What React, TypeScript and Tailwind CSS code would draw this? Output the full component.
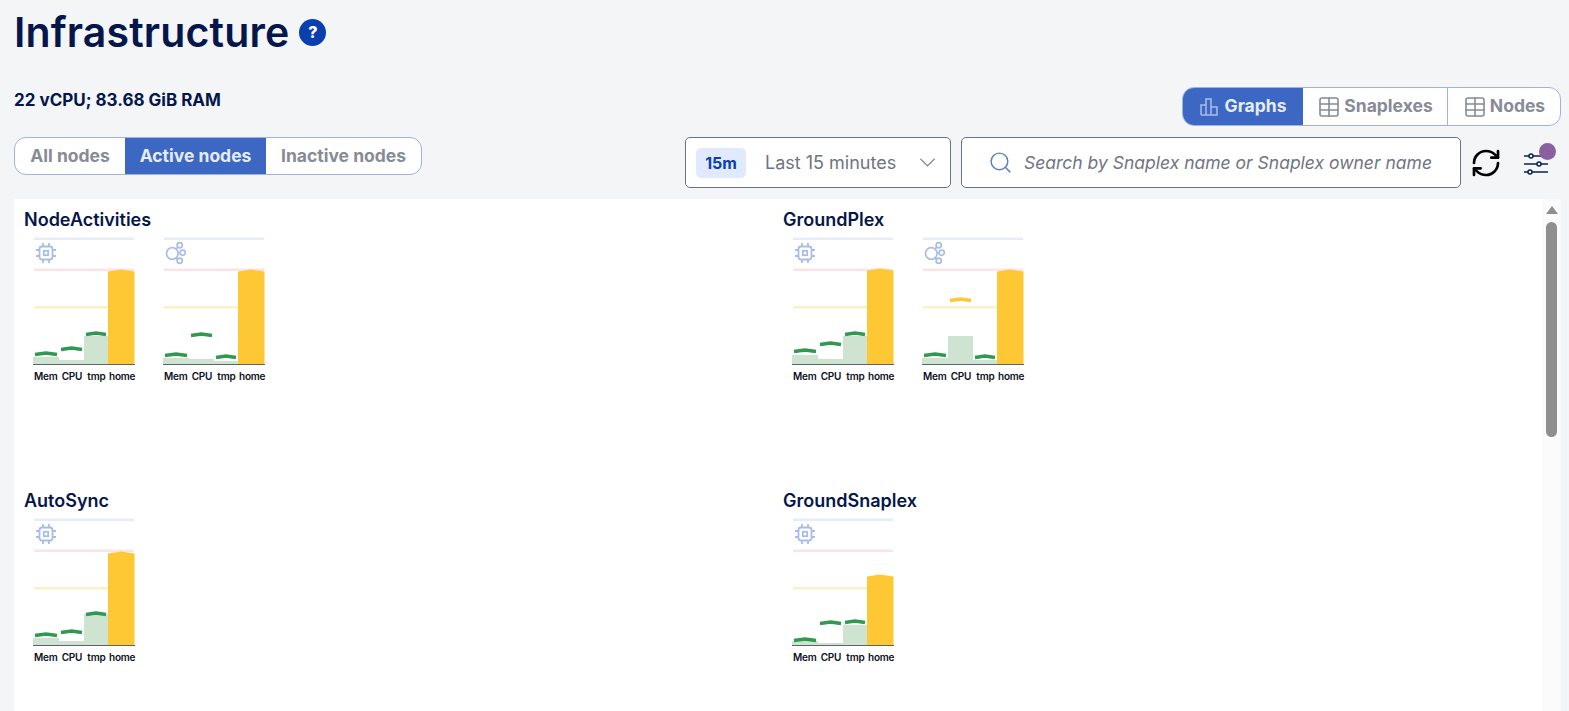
import { ChevronDown, RefreshCw, Search, Table } from "lucide-react"

const FONT = "font-['Inter','Lato',sans-serif]"

interface Bar {
  top: number
  marker: number
  warn?: boolean
}

interface ChartProps {
  icon: "cpu" | "network"
  bars: Bar[]
  home: number
}

function CpuIcon() {
  return (
    <g fill="none" stroke="#a9bde8" strokeWidth="1.800">
      <rect x="6.500" y="9.500" width="13" height="13" rx="2.500" />
      <rect x="10.800" y="13.800" width="4.400" height="4.400" />
      <path d="M10 6v3.500M16 6v3.500M10 22.500v3.500M16 22.500v3.500M3 13h3.500M3 19h3.500M19.500 13h3.500M19.500 19h3.500" />
    </g>
  )
}

function NetworkIcon() {
  return (
    <g fill="none" stroke="#a9bde8" strokeWidth="1.700">
      <circle cx="9.300" cy="16.500" r="5.800" />
      <circle cx="16.700" cy="8.200" r="2.600" />
      <circle cx="19.700" cy="15.700" r="2.600" />
      <circle cx="16.700" cy="23.700" r="2.600" />
      <path d="M13 12l2-2M15 16h2M13 21l2 1.500" />
    </g>
  )
}

// y values are measured from the top of the chart
function Chart({ icon, bars, home }: ChartProps) {
  const xs = [0, 26, 51]
  const widths = [26, 25, 24]
  const labels = [
    { text: "Mem", x: 1 },
    { text: "CPU", x: 28.700 },
    { text: "tmp", x: 54.300 },
    { text: "home", x: 76 },
  ]
  return (
    <svg width="106" height="148" viewBox="0 0 106 148" className="shrink-0">
      <rect x="1" y="0.500" width="100" height="2.500" fill="#e6ecf9" />
      <rect x="1" y="31.500" width="100" height="2.500" fill="#fbe4e9" />
      <rect x="1" y="69" width="100" height="2.500" fill="#fdf0c4" />
      {icon === "cpu" ? <CpuIcon /> : <NetworkIcon />}
      {bars.map((b, i) => (
        <rect key={i} x={xs[i]} y={b.top} width={widths[i]} height={127 - b.top} fill="#cee4d1" />
      ))}
      <path
        d={`M75 ${home + 1.500}L88 ${home - 0.500}L101.500 ${home + 1.500}V127H75Z`}
        fill="#fec835"
      />
      {bars.map((b, i) => {
        const l = xs[i] + 2
        const r = xs[i] + widths[i] - 2
        const m = (l + r) / 2
        return (
          <path
            key={i}
            d={`M${l} ${b.marker + 2.500}L${m} ${b.marker + 1}L${r} ${b.marker + 2.500}`}
            fill="none"
            stroke={b.warn ? "#fec835" : "#2f9950"}
            strokeWidth="3.500"
          />
        )
      })}
      <rect x="0" y="127" width="102" height="1" fill="#5b6270" />
      {labels.map((l) => (
        <text key={l.text} x={l.x} y="143" fontSize="10" fontWeight="600" letterSpacing="-0.2" fill="#0a0f22" fontFamily="Inter, sans-serif">
          {l.text}
        </text>
      ))}
    </svg>
  )
}

interface Group {
  name: string
  charts: ChartProps[]
}

const groups: Group[] = [
  {
    name: "NodeActivities",
    charts: [
      {
        icon: "cpu",
        home: 33,
        bars: [
          { top: 120, marker: 115 },
          { top: 123, marker: 110 },
          { top: 99, marker: 95 },
        ],
      },
      {
        icon: "network",
        home: 33,
        bars: [
          { top: 121, marker: 116 },
          { top: 122, marker: 96 },
          { top: 124, marker: 118 },
        ],
      },
    ],
  },
  {
    name: "GroundPlex",
    charts: [
      {
        icon: "cpu",
        home: 32,
        bars: [
          { top: 118, marker: 112 },
          { top: 122, marker: 105 },
          { top: 99, marker: 95 },
        ],
      },
      {
        icon: "network",
        home: 33,
        bars: [
          { top: 121, marker: 116 },
          { top: 99, marker: 61, warn: true },
          { top: 123, marker: 118 },
        ],
      },
    ],
  },
  {
    name: "AutoSync",
    charts: [
      {
        icon: "cpu",
        home: 34,
        bars: [
          { top: 120, marker: 115 },
          { top: 123, marker: 112 },
          { top: 96, marker: 94 },
        ],
      },
    ],
  },
  {
    name: "GroundSnaplex",
    charts: [
      {
        icon: "cpu",
        home: 57,
        bars: [
          { top: 123, marker: 120 },
          { top: 125, marker: 103 },
          { top: 107, marker: 102 },
        ],
      },
    ],
  },
]

function FilterIcon() {
  return (
    <svg width="26" height="26" viewBox="0 0 26 26" fill="none" stroke="#0a1f52" strokeWidth="1.500">
      <path d="M1 6h5M10 6h14M1 14h13M18 14h7M1 22h4M9 22h16" />
      <circle cx="8" cy="6" r="2" />
      <circle cx="16" cy="14" r="2" />
      <circle cx="7" cy="22" r="2" />
    </svg>
  )
}

function GraphIcon() {
  return (
    <svg width="19" height="19" viewBox="0 0 19 19" fill="none" stroke="#a9bde8" strokeWidth="1.500">
      <path d="M1 18V8h5v10M6 18V2h5v16M11 18V10h6v8H1" />
    </svg>
  )
}

export default function App() {
  return (
    <div className={`${FONT} flex h-screen flex-col overflow-hidden bg-[#f4f5f7] pl-[14px] pr-[8px]`}>
      <div className="flex h-[64px] items-center gap-[10px]">
        <h1 className="text-[41px] font-semibold leading-none tracking-[0.15px] text-[#04164a]">Infrastructure</h1>
        <span className="flex h-[27px] w-[27px] items-center justify-center rounded-full bg-[#0a3fb0] text-[16px] font-extrabold text-white">
          ?
        </span>
      </div>

      <div className="mt-[23px] flex items-start justify-between">
        <div className="mt-[3px] text-[17px] font-bold leading-[20px] text-[#04164a]">22 vCPU; 83.68 GiB RAM</div>
        <div className="flex h-[39px] overflow-hidden rounded-[12px] border border-[#9db2e2] bg-white text-[17.5px] font-bold text-[#878b96]">
          <div className="flex w-[120px] items-center justify-center gap-[6px] bg-[#3c68c4] text-[#e6ecf9]">
            <GraphIcon />
            Graphs
          </div>
          <div className="flex w-[145px] items-center justify-center gap-[3px] border-r border-[#9db2e2]">
            <Table size={24} strokeWidth={1.6} />
            Snaplexes
          </div>
          <div className="flex w-[112px] items-center justify-center gap-[3px]">
            <Table size={24} strokeWidth={1.6} />
            Nodes
          </div>
        </div>
      </div>

      <div className="mt-[11px] flex items-start justify-between">
        <div className="flex h-[38px] overflow-hidden rounded-[12px] border border-[#9db2e2] bg-white text-[17.5px] font-bold text-[#878b96]">
          <div className="flex w-[110px] items-center justify-center">All nodes</div>
          <div className="flex w-[141px] items-center justify-center bg-[#3c68c4] text-[#e6ecf9]">Active nodes</div>
          <div className="flex w-[155px] items-center justify-center">Inactive nodes</div>
        </div>

        <div className="flex items-center">
          <div className="flex h-[51px] w-[266px] items-center rounded-[5px] border border-[#687388] bg-white pl-[10px] pr-[9px]">
            <span className="flex h-[30px] w-[50px] items-center justify-center rounded-[5px] bg-[#e0eafc] text-[16px] font-bold text-[#0a3fb0]">
              15m
            </span>
            <span className="ml-[19px] flex-1 text-[18px] text-[#6f7480]">Last 15 minutes</span>
            <ChevronDown size={27} strokeWidth={1} className="text-[#6f7480]" />
          </div>
          <div className="ml-[10px] flex h-[51px] w-[500px] items-center rounded-[5px] border border-[#687388] bg-white pl-[26px]">
            <Search size={25} strokeWidth={1.4} className="text-[#5d80b5]" />
            <span className="ml-[11px] pt-[1px] text-[17.5px] italic text-[#6f7480]">Search by Snaplex name or Snaplex owner name</span>
          </div>
          <RefreshCw size={32} strokeWidth={2} className="ml-[9px] text-black" />
          <div className="relative ml-[21px] mr-[12px]">
            <FilterIcon />
            <span className="absolute right-[-7px] top-[-7px] h-[17px] w-[17px] rounded-full bg-[#8a60a0]" />
          </div>
        </div>
      </div>

      <div className="mt-[11px] flex min-h-0 flex-1 bg-white">
        <div className="grid flex-1 grid-cols-2 content-start pr-[10px]">
          {groups.map((g) => (
            <div key={g.name} className="h-[281px] pl-[10px] pt-[10px]">
              <h2 className="text-[18px] font-semibold leading-[22px] text-[#04164a]">{g.name}</h2>
              <div className="ml-[9px] mt-[6px] flex gap-[24px]">
                {g.charts.map((c, i) => (
                  <Chart key={i} {...c} />
                ))}
              </div>
            </div>
          ))}
        </div>
        <div className="flex w-[19px] shrink-0 flex-col items-center bg-[#fbfbfb] pt-[7px]">
          <div className="h-0 w-0 border-x-[6px] border-b-[8px] border-x-transparent border-b-[#8f8f8f]" />
          <div className="mt-[8px] h-[215px] w-[11px] rounded-full bg-[#8f8f8f]" />
        </div>
      </div>
    </div>
  )
}
